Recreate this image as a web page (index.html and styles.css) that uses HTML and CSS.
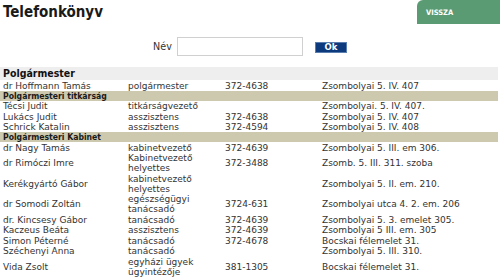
FILE: index.html
```html
<!DOCTYPE html>
<html lang="hu">
<head>
<meta charset="utf-8">
<title>Telefonkönyv</title>
<link rel="stylesheet" href="styles.css">
</head>
<body>
<header class="top">
  <h1 class="title">Telefonkönyv</h1>
  <a class="back" href="#">VISSZA</a>
</header>
<form class="search">
  <label class="label" for="nev">Név</label>
  <input class="field" id="nev" type="text">
  <button class="ok" type="button">Ok</button>
</form>
<table class="book">
  <colgroup>
    <col class="c-name"><col class="c-pos"><col class="c-tel"><col class="c-addr">
  </colgroup>
  <tr class="head"><th colspan="4">Polgármester</th></tr>
  <tr><td>dr Hoffmann Tamás</td><td>polgármester</td><td>372-4638</td><td>Zsombolyai 5. IV. 407</td></tr>
  <tr class="band"><th colspan="4">Polgármesteri titkárság</th></tr>
  <tr><td>Técsi Judit</td><td>titkárságvezető</td><td></td><td>Zsombolyai. 5. IV. 407.</td></tr>
  <tr><td>Lukács Judit</td><td>asszisztens</td><td>372-4638</td><td>Zsombolyai 5. IV. 407</td></tr>
  <tr><td>Schrick Katalin</td><td>asszisztens</td><td>372-4594</td><td>Zsombolyai 5. IV. 408</td></tr>
  <tr class="band"><th colspan="4">Polgármesteri Kabinet</th></tr>
  <tr><td>dr Nagy Tamás</td><td>kabinetvezető</td><td>372-4639</td><td>Zsombolyai 5. III. em 306.</td></tr>
  <tr><td>dr Rimóczi Imre</td><td>Kabinetvezető helyettes</td><td>372-3488</td><td>Zsomb. 5. III. 311. szoba</td></tr>
  <tr><td>Kerékgyártó Gábor</td><td>kabinetvezető helyettes</td><td></td><td>Zsombolyai 5. II. em. 210.</td></tr>
  <tr><td>dr Somodi Zoltán</td><td>egészségügyi tanácsadó</td><td>3724-631</td><td>Zsombolyai utca 4. 2. em. 206</td></tr>
  <tr><td>dr. Kincsesy Gábor</td><td>tanácsadó</td><td>372-4639</td><td>Zsombolyai 5. 3. emelet 305.</td></tr>
  <tr><td>Kaczeus Beáta</td><td>asszisztens</td><td>372-4639</td><td>Zsombolyai 5 III. em. 305</td></tr>
  <tr><td>Simon Péterné</td><td>tanácsadó</td><td>372-4678</td><td>Bocskai félemelet 31.</td></tr>
  <tr><td>Széchenyi Anna</td><td>tanácsadó</td><td></td><td>Zsombolyai 5. III. 310.</td></tr>
  <tr><td>Vida Zsolt</td><td>egyházi ügyek ügyintézője</td><td>381-1305</td><td>Bocskai félemelet 31.</td></tr>
</table>
</body>
</html>
```

FILE: styles.css
```css
body {
  margin: 0;
  font-family: "DejaVu Sans", sans-serif;
  color: #333;
  background: #fff;
}

.top {
  display: flex;
  justify-content: space-between;
  align-items: flex-start;
  height: 25px;
}

.title {
  margin: 0;
  padding: 3px 0 0 3px;
  font-family: "DejaVu Sans Condensed", "DejaVu Sans", sans-serif;
  font-stretch: condensed;
  font-size: 15px;
  line-height: 18px;
  font-weight: bold;
  color: #1a1a1a;
}

.back {
  width: 83px;
  height: 24px;
  box-sizing: border-box;
  padding: 9px 0 0 9px;
  background: #5b9b73;
  border-top-left-radius: 6px;
  color: #fff;
  font-family: "DejaVu Sans Condensed", "DejaVu Sans", sans-serif;
  font-stretch: condensed;
  font-size: 7.5px;
  line-height: 8px;
  font-weight: bold;
  text-decoration: none;
}

.search {
  display: flex;
  justify-content: center;
  align-items: center;
  height: 19px;
  margin: 12px 0 0;
}

.label {
  margin-right: 5px;
  font-size: 9.6px;
}

.field {
  width: 126px;
  height: 19px;
  box-sizing: border-box;
  margin: 0 12px 0 0;
  padding: 0;
  border: 1px solid #d0d0d0;
}

.ok {
  width: 32px;
  height: 11px;
  box-sizing: border-box;
  margin-top: 2px;
  padding: 0;
  background: #0c3a7d;
  border: 1px solid #5a7db0;
  color: #fff;
  font-family: "DejaVu Sans", sans-serif;
  font-size: 8.5px;
  line-height: 9px;
  font-weight: bold;
}

.book {
  width: 498px;
  margin-top: 11px;
  border-collapse: collapse;
  font-size: 9px;
}

.c-name { width: 125px; }
.c-pos { width: 97px; }
.c-tel { width: 97px; }

.book td {
  padding: 0.5px 3px 0;
  line-height: 10px;
  vertical-align: middle;
}

.head th,
.band th {
  padding: 0 3px;
  font-family: "DejaVu Sans Condensed", "DejaVu Sans", sans-serif;
  font-stretch: condensed;
  font-weight: bold;
  text-align: left;
}

.head th {
  height: 13px;
  background: #eeeeee;
  color: #111;
  font-size: 10.5px;
  line-height: 13px;
}

.band th {
  height: 10px;
  background: #cdc9ae;
  color: #1a1a1a;
  font-size: 8.6px;
  line-height: 10px;
}
```
